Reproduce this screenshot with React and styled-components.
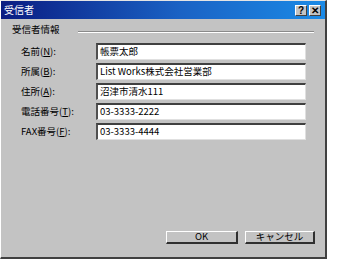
import React from 'react';
import styled, { createGlobalStyle } from 'styled-components';

const GlobalStyle = createGlobalStyle`
  html, body {
    margin: 0;
    padding: 0;
    background: #ffffff;
  }
  body {
    font-family: "Noto Sans CJK JP", "Noto Sans", sans-serif;
    font-size: 9.5px;
    color: #000;
  }
`;

const Window = styled.div`
  width: 327px;
  height: 259px;
  box-sizing: border-box;
  display: flex;
  flex-direction: column;
  background: #c3c3c3;
  border-top: 1px solid #e4e4e4;
  border-left: 1px solid #ffffff;
  border-right: 2px solid #404040;
  border-bottom: 2px solid #404040;
`;

const TitleBar = styled.div`
  height: 18px;
  display: flex;
  align-items: center;
  padding: 0 4px 0 3px;
  background: linear-gradient(to right, #0a1c82 0%, #1a62c4 55%, #1a8ae6 100%);
  color: #fff;
`;

const Title = styled.span`
  flex: 1;
  font-size: 10px;
  line-height: 1;
`;

const TitleButton = styled.div`
  width: 12px;
  height: 11px;
  box-sizing: border-box;
  margin-left: ${(p) => (p.$gap ? '2px' : '0')};
  display: flex;
  align-items: center;
  justify-content: center;
  background: #c3c3c3;
  color: #000;
  font-family: "Liberation Sans", sans-serif;
  font-weight: bold;
  font-size: 10px;
  border-top: 1px solid #fff;
  border-left: 1px solid #fff;
  border-right: 1px solid #404040;
  border-bottom: 1px solid #404040;
`;

const Body = styled.div`
  flex: 1;
  display: flex;
  flex-direction: column;
  padding: 5px 10px 13px 11px;
`;

const GroupHeader = styled.div`
  display: flex;
  align-items: center;
  height: 12px;
  gap: 18px;
  padding-right: 1px;
`;

const GroupLabel = styled.span`
  line-height: 1;
`;

const Rule = styled.div`
  flex: 1;
  height: 0;
  margin-top: 3px;
  border-top: 1px solid #8a8a8a;
  border-bottom: 1px solid #ffffff;
`;

const Form = styled.div`
  display: grid;
  grid-template-columns: 75px 210px;
  row-gap: 3px;
  margin-top: 7px;
  padding-left: 9px;
  align-items: center;
`;

const Label = styled.label`
  line-height: 1;
  white-space: nowrap;
`;

const Field = styled.div`
  height: 17px;
  box-sizing: border-box;
  display: flex;
  align-items: center;
  padding-left: 2px;
  background: #fff;
  border-top: 2px solid #404040;
  border-left: 2px solid #505050;
  border-right: 1px solid #e0e0e0;
  border-bottom: 1px solid #e0e0e0;
  line-height: 1;
  white-space: nowrap;
  overflow: hidden;
`;

const Buttons = styled.div`
  margin-top: auto;
  display: flex;
  justify-content: flex-end;
  gap: 7px;
`;

const Button = styled.div`
  width: ${(p) => p.$w}px;
  height: 13px;
  box-sizing: border-box;
  display: flex;
  align-items: center;
  justify-content: center;
  background: #c3c3c3;
  font-size: 9.5px;
  line-height: 1;
  border-top: 1px solid #ffffff;
  border-left: 1px solid #ffffff;
  border-right: 2px solid #303030;
  border-bottom: 2px solid #303030;
`;

const rows = [
  ['名前', 'N', '帳票太郎'],
  ['所属', 'B', 'List Works株式会社営業部'],
  ['住所', 'A', '沼津市清水111'],
  ['電話番号', 'T', '03-3333-2222'],
  ['FAX番号', 'F', '03-3333-4444'],
];

export default function App() {
  return (
    <>
      <GlobalStyle />
      <Window>
        <TitleBar>
          <Title>受信者</Title>
          <TitleButton>?</TitleButton>
          <TitleButton $gap>✕</TitleButton>
        </TitleBar>
        <Body>
          <GroupHeader>
            <GroupLabel>受信者情報</GroupLabel>
            <Rule />
          </GroupHeader>
          <Form>
            {rows.map(([name, key, value]) => (
              <React.Fragment key={key}>
                <Label>
                  {name}(<u>{key}</u>):
                </Label>
                <Field>{value}</Field>
              </React.Fragment>
            ))}
          </Form>
          <Buttons>
            <Button $w={72}>OK</Button>
            <Button $w={70}>キャンセル</Button>
          </Buttons>
        </Body>
      </Window>
    </>
  );
}
